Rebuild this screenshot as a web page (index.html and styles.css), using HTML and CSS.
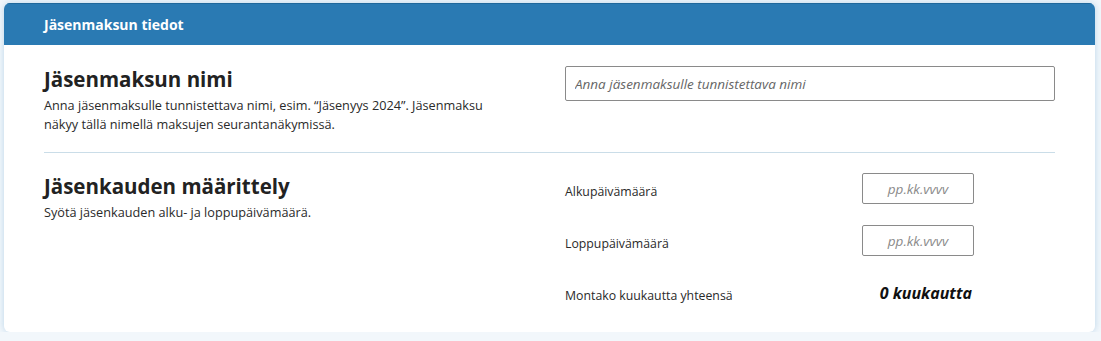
FILE: index.html
```html
<!DOCTYPE html>
<html lang="fi">
  <head>
    <meta charset="UTF-8" />
    <meta name="viewport" content="width=device-width, initial-scale=1.0" />
    <title>Jäsenmaksun tiedot</title>
    <link rel="stylesheet" href="styles.css">
  </head>
  <body>
    <div class="card">
      <div class="card-header">Jäsenmaksun tiedot</div>

      <div class="card-body">
        <div class="section section-divided">
          <div class="section-info">
            <h2>Jäsenmaksun nimi</h2>
            <p>Anna jäsenmaksulle tunnistettava nimi, esim. “Jäsenyys 2024”. Jäsenmaksu näkyy tällä nimellä maksujen seurantanäkymissä.</p>
          </div>
          <div class="section-fields">
            <input type="text" class="name-input" placeholder="Anna jäsenmaksulle tunnistettava nimi" />
          </div>
        </div>

        <div class="section">
          <div class="section-info">
            <h2>Jäsenkauden määrittely</h2>
            <p>Syötä jäsenkauden alku- ja loppupäivämäärä.</p>
          </div>
          <div class="section-fields">
            <div class="period-grid">
              <label for="startDate">Alkupäivämäärä</label>
              <input type="text" id="startDate" class="date-input" placeholder="pp.kk.vvvv" />

              <label for="endDate">Loppupäivämäärä</label>
              <input type="text" id="endDate" class="date-input" placeholder="pp.kk.vvvv" />

              <label>Montako kuukautta yhteensä</label>
              <span class="month-count">0 kuukautta</span>
            </div>
          </div>
        </div>
      </div>
    </div>
  </body>
</html>
```

FILE: styles.css
```css
body {
  margin: 0;
  padding: 3px 6px 0 4px;
  font-family: "Open Sans", "Noto Sans", sans-serif;
  background-color: #f2f7fb;
  color: #222;
}

.card {
  background-color: #fff;
  border-radius: 6px;
  overflow: hidden;
  box-shadow: 0 0 7px rgba(60, 140, 195, 0.3);
}

.card-header {
  height: 42px;
  display: flex;
  align-items: center;
  padding: 0 40px;
  background-color: #2a7ab3;
  border-top: 1px solid #1f689c;
  box-sizing: border-box;
  color: #fff;
  font-size: 14px;
  font-weight: 700;
}

.card-body {
  padding: 0 40px 24px 40px;
}

.section {
  display: grid;
  grid-template-columns: 1fr 1fr;
  column-gap: 31px;
  padding-top: 20px;
}

.section-divided {
  padding-top: 21px;
  padding-bottom: 18px;
  border-bottom: 1px solid #cadde8;
}

.section-info h2 {
  margin: 0;
  font-size: 20.5px;
  line-height: 27px;
  font-weight: 700;
  color: #222;
}

.section-info p {
  max-width: 460px;
  margin: 3px 0 0 0;
  font-size: 12.7px;
  line-height: 19px;
  color: #2a2a2a;
}

.name-input {
  width: 100%;
  height: 35px;
  box-sizing: border-box;
  padding: 0 9px;
  border: 1px solid #8a8a8a;
  border-radius: 2px;
  font-family: inherit;
  font-size: 13.5px;
}

.name-input::placeholder,
.date-input::placeholder {
  font-style: italic;
  color: #666;
}

.date-input::placeholder {
  color: #8a8a8a;
}

.period-grid {
  display: grid;
  grid-template-columns: 297px 112px;
  grid-auto-rows: 31px;
  row-gap: 21px;
  align-items: center;
}

.period-grid label {
  padding-top: 6px;
  font-size: 12.3px;
  color: #2a2a2a;
}

.date-input {
  height: 31px;
  box-sizing: border-box;
  border: 1px solid #8a8a8a;
  border-radius: 2px;
  text-align: center;
  font-family: inherit;
  font-size: 13.5px;
}

.month-count {
  text-align: right;
  padding-right: 2px;
  font-size: 16px;
  line-height: 20px;
  font-weight: 700;
  font-style: italic;
  color: #111;
}
```
